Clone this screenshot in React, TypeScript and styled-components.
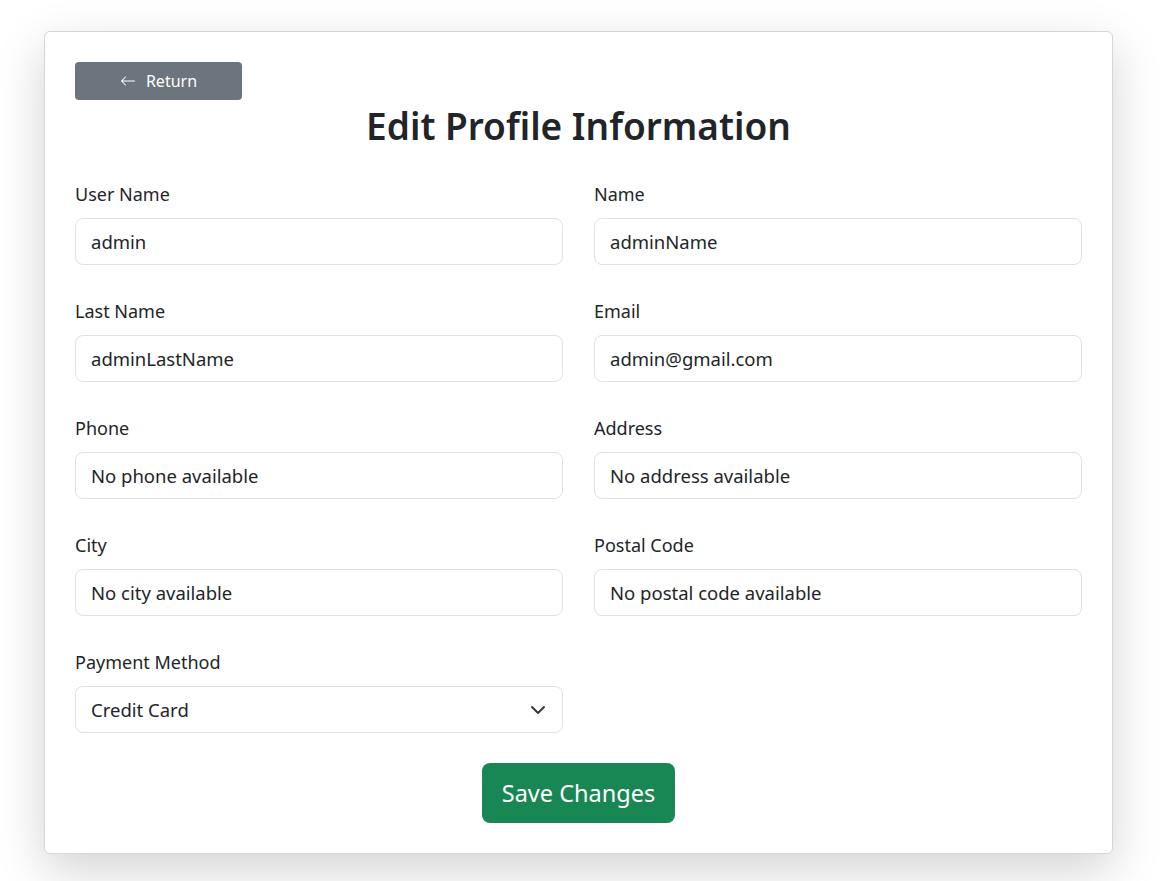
import styled, { createGlobalStyle } from 'styled-components';

const GlobalStyle = createGlobalStyle`
  body {
    margin: 0;
    background: #ffffff;
    font-family: 'Noto Sans', 'Open Sans', sans-serif;
    color: #212529;
  }
`;

const Page = styled.div`
  padding: 31px 55px 28px 44px;
`;

const Card = styled.div`
  background: #fff;
  border: 1px solid #d4d6d8;
  border-radius: 6px;
  box-shadow: 0 16px 48px rgba(0, 0, 0, 0.175);
  padding: 30px;
`;

const ReturnButton = styled.button`
  display: flex;
  align-items: center;
  justify-content: center;
  gap: 10px;
  width: 167px;
  height: 38px;
  background: #6c757d;
  color: #fff;
  border: none;
  border-radius: 4px;
  font-family: inherit;
  font-size: 16px;
  cursor: pointer;
`;

const Title = styled.h1`
  margin: 2px 0 31px;
  text-align: center;
  font-size: 37px;
  font-weight: 600;
  line-height: 48px;
`;

const Grid = styled.div`
  display: grid;
  grid-template-columns: 1fr 1fr;
  column-gap: 31px;
  row-gap: 33px;
`;

const Field = styled.div`
  display: flex;
  flex-direction: column;
`;

const Label = styled.label`
  font-size: 18px;
  line-height: 27px;
  margin-bottom: 10px;
`;

const Input = styled.input`
  box-sizing: border-box;
  height: 47px;
  padding: 8px 15px;
  font-family: inherit;
  font-size: 18.5px;
  color: #212529;
  border: 1px solid #dee2e6;
  border-radius: 8px;
  outline: none;
`;

const SelectWrap = styled.div`
  position: relative;
`;

const Select = styled.select`
  box-sizing: border-box;
  width: 100%;
  height: 47px;
  padding: 8px 48px 8px 15px;
  font-family: inherit;
  font-size: 18.5px;
  color: #212529;
  background: #fff;
  border: 1px solid #dee2e6;
  border-radius: 8px;
  appearance: none;
  outline: none;
`;

const Chevron = styled.svg`
  position: absolute;
  right: 17px;
  top: 50%;
  transform: translateY(-50%);
  pointer-events: none;
`;

const Footer = styled.div`
  display: flex;
  justify-content: center;
  margin-top: 30px;
`;

const SaveButton = styled.button`
  height: 60px;
  padding: 0 20px;
  background: #198754;
  color: #fff;
  border: none;
  border-radius: 8px;
  font-family: inherit;
  font-size: 23.5px;
  cursor: pointer;
`;

const fields = [
  ['User Name', 'admin'],
  ['Name', 'adminName'],
  ['Last Name', 'adminLastName'],
  ['Email', 'admin@gmail.com'],
  ['Phone', 'No phone available'],
  ['Address', 'No address available'],
  ['City', 'No city available'],
  ['Postal Code', 'No postal code available'],
];

function App() {
  return (
    <Page>
      <GlobalStyle />
      <Card>
        <ReturnButton>
          <svg width="16" height="16" viewBox="0 0 16 16" fill="currentColor">
            <path
              fillRule="evenodd"
              d="M15 8a.5.5 0 0 0-.5-.5H2.707l3.147-3.146a.5.5 0 1 0-.708-.708l-4 4a.5.5 0 0 0 0 .708l4 4a.5.5 0 0 0 .708-.708L2.707 8.5H14.5A.5.5 0 0 0 15 8"
            />
          </svg>
          Return
        </ReturnButton>
        <Title>Edit Profile Information</Title>
        <Grid>
          {fields.map(([label, value]) => (
            <Field key={label}>
              <Label>{label}</Label>
              <Input defaultValue={value} />
            </Field>
          ))}
          <Field>
            <Label>Payment Method</Label>
            <SelectWrap>
              <Select defaultValue="Credit Card">
                <option>Credit Card</option>
                <option>PayPal</option>
              </Select>
              <Chevron width="16" height="16" viewBox="0 0 16 16" fill="none">
                <path
                  d="m2 5 6 6 6-6"
                  stroke="#343a40"
                  strokeWidth="2"
                  strokeLinecap="round"
                  strokeLinejoin="round"
                />
              </Chevron>
            </SelectWrap>
          </Field>
        </Grid>
        <Footer>
          <SaveButton>Save Changes</SaveButton>
        </Footer>
      </Card>
    </Page>
  );
}

export default App;
